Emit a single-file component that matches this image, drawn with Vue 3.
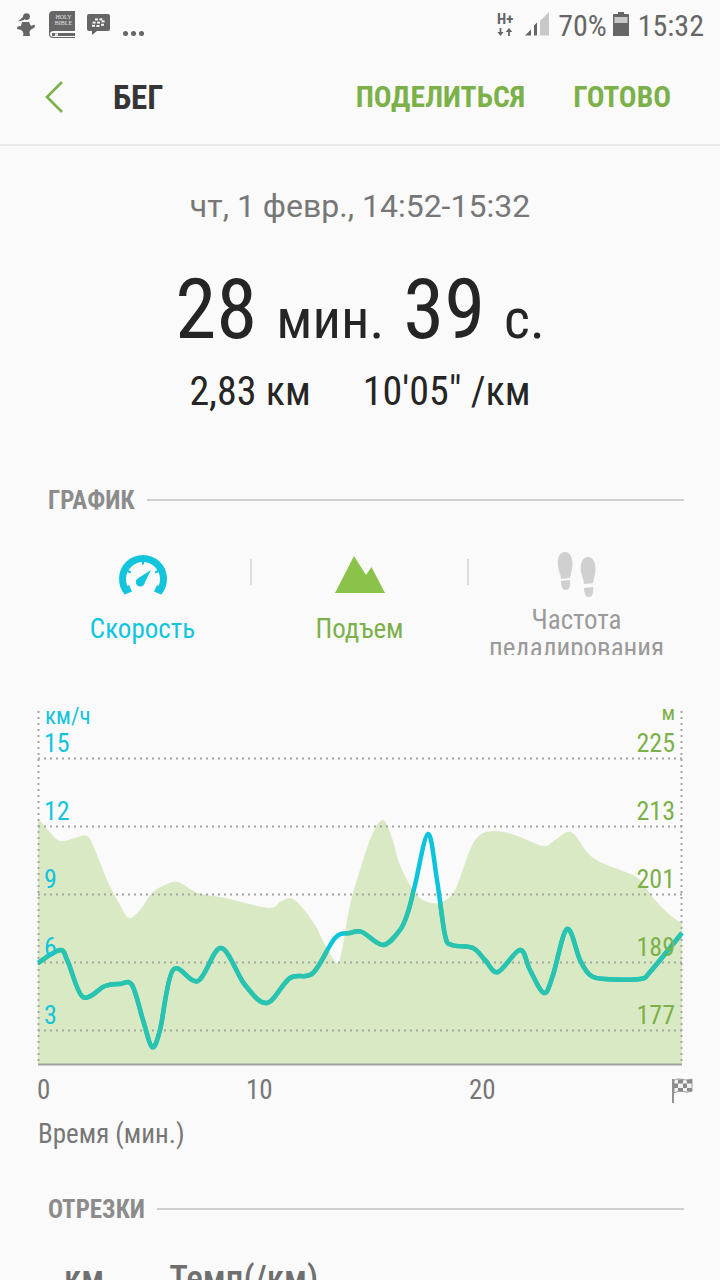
<template>
  <div class="screen">
    <div class="status-bar">
      <div class="status-left">
        <svg class="ic-runner" viewBox="0 0 20 24" width="20" height="24">
          <circle cx="10.5" cy="3.6" r="3.4" fill="#666" />
          <path d="M8 3 L2 8.5 L8 7 Z" fill="#666" />
          <path d="M6 9 H13 L15 13 L18.5 11.5 L19 14 L14.5 17 L13.5 19 L14 23 H7 C8 20 7 18 5 17 L1 16 L1.5 13.5 L5 13 Z" fill="#666" />
        </svg>
        <svg class="ic-bible" viewBox="0 0 27 27" width="27" height="27">
          <path d="M4 0 H26 V20 H5 Q1 20 1 23 Q1 26 5 26 H26 V27 H4 Q0 27 0 23 V4 Q0 0 4 0 Z" fill="#666" />
          <rect x="3" y="22" width="23" height="3" fill="#666" />
          <rect x="6" y="22.4" width="3" height="2.4" fill="#eee" />
          <text class="bible-text" x="14.5" y="8.4">HOLY</text>
          <text class="bible-text" x="14.5" y="14.4">BIBLE</text>
        </svg>
        <svg class="ic-bbm" viewBox="0 0 23 21" width="23" height="21">
          <path d="M2 0 H21 Q23 0 23 2 V15 Q23 17 21 17 H10 L5 21 V17 H2 Q0 17 0 15 V2 Q0 0 2 0 Z" fill="#666" />
          <g fill="#f4f4f4">
            <rect x="8" y="4.4" width="3" height="2" />
            <rect x="12.4" y="4.4" width="3" height="2" />
            <rect x="5.6" y="7.6" width="3" height="2" />
            <rect x="10" y="7.6" width="3" height="2" />
            <rect x="14.6" y="6.4" width="3" height="2" />
            <rect x="5" y="10.8" width="3" height="2" />
            <rect x="9.4" y="11" width="3" height="2" />
            <rect x="14" y="9.8" width="3" height="2" />
          </g>
        </svg>
        <span class="dots"><i></i><i></i><i></i></span>
      </div>
      <div class="status-right">
        <svg class="ic-net" viewBox="0 0 18 24" width="18" height="24">
          <text class="net-text" x="0" y="11">H+</text>
          <path d="M2.6 15 H4.4 V19 H6.6 L3.5 23 L0.4 19 H2.6 Z" fill="#666" />
          <path d="M11.1 23 H12.9 V19 H15.4 L12 15 L8.6 19 H11.1 Z" fill="#666" />
        </svg>
        <svg class="ic-signal" viewBox="0 0 24 24" width="24" height="24">
          <path d="M0 23.5 L6 17.5 V23.5 Z M9 23.5 V13.5 L12 10.5 V23.5 Z" fill="#666" />
          <path d="M15 23.5 V9 L24 0 V23.5 Z" fill="#c8c8c8" />
        </svg>
        <span class="pct">70%</span>
        <svg class="ic-battery" viewBox="0 0 16 24" width="16" height="24">
          <path d="M5 0 H11 V2 H15 Q16 2 16 3 V24 H0 V3 Q0 2 1 2 H5 Z" fill="#666" />
          <rect x="1.4" y="5" width="13.2" height="6" fill="#c9c9c9" />
        </svg>
        <span class="time">15:32</span>
      </div>
    </div>

    <header class="action-bar">
      <svg class="back" viewBox="0 0 20 34" width="20" height="34">
        <path d="M18 2 L3 17 L18 32" fill="none" stroke="#7cb14a" stroke-width="2.6" />
      </svg>
      <span class="title">БЕГ</span>
      <span class="action share">ПОДЕЛИТЬСЯ</span>
      <span class="action done">ГОТОВО</span>
    </header>

    <section class="summary">
      <p class="date">чт, 1 февр., 14:52-15:32</p>
      <p class="duration">
        <b>28</b><small>мин.</small><b>39</b><small>с.</small>
      </p>
      <p class="stats"><span>2,83 км</span><span>10'05" /км</span></p>
    </section>

    <div class="sec-head graph-head">
      <span>ГРАФИК</span>
      <i></i>
    </div>

    <div class="tabs">
      <div class="tab speed">
        <svg viewBox="0 0 50 46" width="50" height="46">
          <path d="M9.5 40.4 A20.5 20.5 0 1 1 40.5 40.4" fill="none" stroke="#12c4dc" stroke-width="7" />
          <path d="M4 37 L11 33 L14 39.5 L8 42 Z M46 37 L39 33 L36 39.5 L42 42 Z" fill="#12c4dc" />
          <path d="M24 9 H26 V12.5 H24 Z M9.2 20 L10.4 18 L13.4 19.8 L12.4 21.6 Z M40.8 20 L39.6 18 L36.6 19.8 L37.6 21.6 Z" fill="#12c4dc" />
          <path d="M33 18 L26.8 30.6 A4.5 4.5 0 1 1 20.4 26 Z" fill="#12c4dc" />
        </svg>
        <span>Скорость</span>
      </div>
      <i class="tab-sep"></i>
      <div class="tab climb">
        <svg viewBox="0 0 50 46" width="50" height="46">
          <path d="M0 41 L19 4 L31 23 L36.5 15 L50 41 Z" fill="#8bc34a" />
        </svg>
        <span>Подъем</span>
      </div>
      <i class="tab-sep"></i>
      <div class="tab cadence">
        <svg viewBox="0 0 40 46" width="40" height="46">
          <g fill="#d0d0d0">
            <path d="M8 0 C13 0 16 6 15.5 14 C15 19 13.5 22 13 26 L4 27 C4 22 1 19 0.8 12 C0.5 5 3 0 8 0 Z" />
            <path d="M4 29 L13 28 C13.5 33 13 38 8.5 38 C5 38 4 33 4 29 Z" />
            <path d="M8 0 C13 0 16 6 15.5 14 C15 19 13.5 22 13 26 L4 27 C4 22 1 19 0.8 12 C0.5 5 3 0 8 0 Z" transform="translate(23 5)" />
            <path d="M4 29 L13 28 C13.5 33 13 38 8.5 38 C5 38 4 33 4 29 Z" transform="translate(23 7)" />
          </g>
        </svg>
        <span>Частота<br />педалирования</span>
      </div>
    </div>

    <div class="chart-wrap">
      <svg class="chart" viewBox="0 0 720 374" width="720" height="374">
        <defs>
          <clipPath id="area-clip"><path :d="areaPath" /></clipPath>
        </defs>
        <path :d="areaPath" fill="#d9e9c4" />
        <g class="grid">
          <line v-for="y in gridY" :key="y" x1="38" x2="682" :y1="y" :y2="y" />
          <line x1="38.5" x2="38.5" y1="11" y2="364" />
          <line x1="681.5" x2="681.5" y1="11" y2="364" />
        </g>
        <line x1="38" x2="682" y1="364.5" y2="364.5" stroke="#a0a0a0" stroke-width="2" />
        <path :d="linePath" class="speed-line cyan" />
        <path :d="linePath" class="speed-line teal" clip-path="url(#area-clip)" />
        <text class="unit cyan-t" x="45" y="24">км/ч</text>
        <text class="unit-m green-t" x="675" y="20" text-anchor="end">м</text>
        <text v-for="t in leftTicks" :key="t.v" class="tick cyan-t" x="44" :y="t.y">{{ t.v }}</text>
        <text v-for="t in rightTicks" :key="t.v" class="tick green-t" x="675" :y="t.y" text-anchor="end">{{ t.v }}</text>
      </svg>
    </div>

    <div class="x-axis">
      <span class="x0">0</span>
      <span class="x10">10</span>
      <span class="x20">20</span>
      <svg class="flag" viewBox="0 0 22 26" width="22" height="26">
        <path d="M2 1 V25" stroke="#777" stroke-width="1.6" />
        <path d="M3 2 Q8 0 12 1.5 T21 1 V13 Q16 15 12 13.5 T3 15 Z" fill="#f2f2f2" stroke="#8a8a8a" stroke-width="0.8" />
        <path d="M7 1.5 H12 V5.5 H7 Z M16 1.5 H21 V5.5 H16 Z M3 5.5 H7 V10 H3 Z M12 5.5 H16 V10 H12 Z M7 10 H12 V13.5 H7 Z M16 10 H21 V13.5 H16 Z" fill="#8a8a8a" />
      </svg>
    </div>
    <p class="x-label">Время (мин.)</p>

    <div class="sec-head split-head">
      <span>ОТРЕЗКИ</span>
      <i></i>
    </div>

    <div class="split-cols">
      <span class="col-km">км</span>
      <span class="col-pace">Темп(/км)</span>
    </div>
  </div>
</template>

<script setup>
const top = 700

const area = [
  [38, 818], [48, 830], [60, 841], [75, 838], [87, 836], [95, 850], [108, 882], [120, 905], [129, 918],
  [140, 910], [152, 893], [165, 885], [178, 882], [198, 893], [225, 898], [268, 908], [280, 902], [290, 898],
  [300, 905], [315, 925], [325, 945], [337, 963], [342, 950], [350, 905], [360, 870], [372, 835], [383, 820],
  [392, 838], [400, 865], [415, 893], [428, 902], [442, 902], [455, 890], [470, 850], [480, 835], [495, 831],
  [515, 835], [543, 846], [555, 840], [567, 832], [575, 835], [587, 852], [600, 862], [628, 873], [640, 880],
  [655, 900], [670, 915], [682, 923]
]

const line = [
  [38, 963], [60, 950], [68, 962], [83, 997], [105, 986], [120, 984], [132, 985], [143, 1020], [152, 1047],
  [160, 1030], [173, 970], [198, 981], [221, 948], [245, 985], [267, 1003], [290, 978], [313, 973], [335, 938],
  [350, 933], [362, 932], [383, 945], [400, 930], [408, 912], [415, 885], [428, 834], [437, 880], [445, 935],
  [452, 945], [473, 948], [485, 960], [498, 972], [520, 950], [530, 970], [544, 993], [553, 975], [567, 929],
  [580, 960], [590, 975], [605, 979], [640, 979], [650, 972], [682, 933]
]

// catmull-rom to bezier, points are in page coordinates
function smooth(points) {
  const pts = points.map(([x, y]) => [x, y - top])
  let d = `M${pts[0][0]} ${pts[0][1]}`
  for (let i = 0; i < pts.length - 1; i++) {
    const p0 = pts[i - 1] || pts[i]
    const p1 = pts[i]
    const p2 = pts[i + 1]
    const p3 = pts[i + 2] || p2
    const c1x = p1[0] + (p2[0] - p0[0]) / 6
    const c1y = p1[1] + (p2[1] - p0[1]) / 6
    const c2x = p2[0] - (p3[0] - p1[0]) / 6
    const c2y = p2[1] - (p3[1] - p1[1]) / 6
    d += ` C${c1x.toFixed(1)} ${c1y.toFixed(1)} ${c2x.toFixed(1)} ${c2y.toFixed(1)} ${p2[0]} ${p2[1]}`
  }
  return d
}

const linePath = smooth(line)
const areaPath = `${smooth(area)} L682 364 L38 364 Z`
const gridY = [58.5, 126.5, 194.5, 262.5, 330.5]
const leftTicks = [
  { v: 15, y: 52 }, { v: 12, y: 120 }, { v: 9, y: 188 }, { v: 6, y: 256 }, { v: 3, y: 324 }
]
const rightTicks = [
  { v: 225, y: 52 }, { v: 213, y: 120 }, { v: 201, y: 188 }, { v: 189, y: 256 }, { v: 177, y: 324 }
]
</script>

<style>
html,
body {
  margin: 0;
  background: #fafafa;
}
</style>

<style scoped>
.screen {
  width: 720px;
  height: 1280px;
  overflow: hidden;
  background: #fafafa;
  font-family: Roboto, "Noto Sans", sans-serif;
  font-stretch: 75%;
  color: #252525;
}

.status-bar {
  height: 50px;
  display: flex;
  justify-content: space-between;
  align-items: flex-start;
  color: #666;
}

.status-left {
  display: flex;
  align-items: flex-start;
  padding: 11px 0 0 16px;
}

.ic-runner {
  margin-top: 2px;
}

.ic-bible {
  margin-left: 13px;
}

.ic-bbm {
  margin: 3px 0 0 11px;
}

.dots {
  display: flex;
  gap: 3px;
  margin: 20px 0 0 13px;
}

.dots i {
  width: 5px;
  height: 5px;
  border-radius: 50%;
  background: #666;
}

.bible-text {
  fill: #e4e4e4;
  font-family: "Liberation Serif", serif;
  font-size: 6px;
  text-anchor: middle;
}

.status-right {
  display: flex;
  align-items: flex-start;
  padding: 11px 16px 0 0;
}

.net-text {
  fill: #666;
  font-family: Roboto, sans-serif;
  font-size: 15px;
  font-weight: 700;
}

.ic-net {
  margin-top: 2px;
}

.ic-signal {
  margin: 1px 0 0 10px;
}

.pct,
.time {
  font-size: 30px;
  line-height: 30px;
  color: #666;
}

.pct {
  margin-left: 9px;
}

.ic-battery {
  margin: 1px 0 0 6px;
}

.time {
  margin-left: 9px;
}

.action-bar {
  height: 96px;
  display: flex;
  align-items: center;
  border-bottom: 2px solid #e9e9e9;
  padding-left: 44px;
  box-sizing: border-box;
}

.title {
  margin-left: 49px;
  font-size: 33px;
  font-weight: 700;
  color: #353535;
}

.action {
  font-size: 29.5px;
  font-weight: 700;
  color: #7cb14a;
}

.share {
  margin-left: auto;
}

.done {
  margin: 0 49px 0 48px;
}

.summary {
  text-align: center;
}

.summary p {
  margin: 0;
}

.date {
  padding-top: 41px;
  font-size: 32px;
  font-stretch: 100%;
  line-height: 38px;
  color: #777;
}

.summary .duration {
  margin-top: 41px;
  display: flex;
  justify-content: center;
  align-items: baseline;
  height: 88px;
  line-height: 88px;
}

.duration b {
  font-size: 83px;
  font-weight: 400;
}

.duration small {
  font-size: 56px;
  margin: 0 19px;
}

.duration small:last-child {
  margin-right: 0;
}

.summary .stats {
  margin-top: 15px;
  display: flex;
  justify-content: center;
  gap: 52px;
  font-size: 40px;
  line-height: 46px;
}

.sec-head {
  display: flex;
  align-items: center;
  margin: 0 36px 0 48px;
  font-size: 25px;
  font-weight: 700;
  color: #8c8c8c;
}

.sec-head i {
  flex: 1;
  height: 2px;
  background: #cfcfcf;
  margin-left: 12px;
}

.graph-head {
  margin-top: 68px;
  height: 34px;
}

.tabs {
  display: flex;
  height: 103px;
  margin-top: 35px;
  overflow: hidden;
  padding: 0 35px;
}

.tab {
  width: 215px;
  display: flex;
  flex-direction: column;
  align-items: center;
  font-size: 27px;
  line-height: 36px;
  text-align: center;
}

.tab svg {
  display: block;
  flex: none;
  margin-bottom: 13px;
}

.tab-sep {
  width: 2px;
  height: 26px;
  margin-top: 7px;
  background: #dcdcdc;
}

.speed {
  color: #12c4dc;
}

.climb {
  color: #7cb14a;
}

.cadence {
  color: #9a9a9a;
  line-height: 28px;
}

.cadence svg {
  margin-bottom: 8px;
}

.chart-wrap {
  height: 374px;
  margin-top: 45px;
}

.chart {
  display: block;
}

.grid line {
  stroke: #a5a5a5;
  stroke-width: 2;
  stroke-dasharray: 2 4;
}

.speed-line {
  fill: none;
  stroke-width: 4.5;
  stroke-linejoin: round;
}

.cyan {
  stroke: #0cc4dc;
}

.teal {
  stroke: #2ac3ae;
}

.unit {
  font-size: 23px;
}

.unit-m {
  font-size: 21px;
}

.tick {
  font-size: 26px;
}

.cyan-t {
  fill: #12c4dc;
}

.green-t {
  fill: #7cb14a;
}

.x-axis {
  position: relative;
  height: 43px;
  font-size: 27px;
  line-height: 32px;
  color: #777;
}

.x-axis span {
  position: absolute;
  top: 0;
}

.x0 {
  left: 37px;
}

.x10 {
  left: 246px;
}

.x20 {
  left: 469px;
}

.flag {
  position: absolute;
  left: 671px;
  top: 4px;
}

.x-label {
  margin: 0 0 0 38px;
  font-size: 27px;
  line-height: 34px;
  color: #777;
}

.split-head {
  margin-top: 38px;
  height: 40px;
}

.split-cols {
  display: flex;
  align-items: baseline;
  margin-top: 30px;
  font-size: 35px;
  line-height: 40px;
  font-weight: 500;
  color: #6f6f6f;
}

.col-km {
  margin-left: 64px;
}

.col-pace {
  margin-left: 65px;
}
</style>
